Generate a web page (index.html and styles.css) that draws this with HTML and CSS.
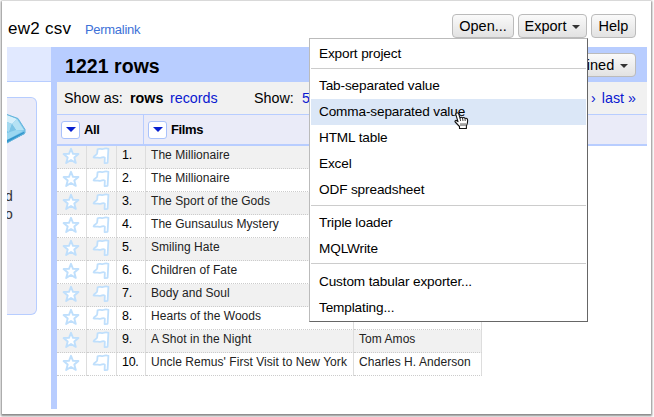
FILE: index.html
```html
<!DOCTYPE html>
<html lang="en">
<head>
<meta charset="utf-8">
<title>Project rows</title>
<link rel="stylesheet" href="styles.css">
</head>
<body>
<svg class="defs" width="0" height="0">
  <symbol id="star" viewBox="0 0 18 18"><path d="M9 1.8L11 6.8L16.4 7L12.3 10.5L13.8 15.9L9 13L4.2 15.9L5.7 10.5L1.6 7L7 6.8Z" fill="#fff" stroke="#bfdffc" stroke-width="1.9" stroke-linejoin="round"/></symbol>
  <symbol id="flag" viewBox="0 0 18 18"><path d="M5.6 2.2C7.5 1.2 9 2.6 11 2C13 1.3 14.8 1.3 16.4 1.8L15.6 15.8L12.6 16.2L12.8 10.6C11 9.2 10 11.3 7.5 10.8C5.5 10 4 11.2 1.6 10.4C2 8.5 5.4 8 5.2 6.2Z" fill="#fff" stroke="#bfdffc" stroke-width="1.8" stroke-linejoin="round"/></symbol>
</svg>
<div class="window">
  <header class="header">
    <span class="project">ew2 csv</span>
    <a class="permalink">Permalink</a>
    <div class="actions">
      <span class="button open">Open...</span>
      <span class="button export">Export<i class="caret"></i></span>
      <span class="button help">Help</span>
    </div>
  </header>
  <div class="body">
    <aside class="side">
      <div class="tabs"></div>
      <div class="facet">
        <svg class="gem" width="19" height="32" viewBox="0 0 19 32">
          <path d="M0 1.5L11 5.5L18 16.5L17.5 20L0 30Z" fill="#76c2e8"/>
          <path d="M0 2L10 6L5 11L0 9Z" fill="#d6f0fb"/>
          <path d="M0 9L5 11L2 19L0 18Z" fill="#a4daf1"/>
          <path d="M10 6L17 17L9 17L5 11Z" fill="#b5e2f4"/>
          <path d="M5 11L9 17L2 20Z" fill="#7cc4e6"/>
          <path d="M0 20L9 17L17 17.5L0 27Z" fill="#9bd7f0"/>
          <path d="M0 27L17.5 18.5V21L0 30Z" fill="#3295cc"/>
          <path d="M0 1.5L11 5.5L18 16.5V20L0 30" fill="none" stroke="#65b5dc"/>
        </svg>
        <div class="hint">d</div>
        <div class="hint">o</div>
      </div>
    </aside>
    <main class="main">
      <div class="summary"><h1>1221 rows</h1><span class="button refined">fined<i class="caret"></i></span></div>
      <div class="controls">
        <span class="showas">Show as:</span><b>rows</b><a class="records">records</a>
        <span class="show">Show:</span><a class="five">5</a><a class="pager">› <span>last »</span></a>
      </div>
      <div class="thead">
        <div class="th all"><i class="drop"></i>All</div>
        <div class="th"><i class="drop"></i>Films</div>
      </div>
      <div class="rows">
        <div class="row"><div><svg><use href="#star"/></svg></div><div><svg><use href="#flag"/></svg></div><div class="num">1.</div><div>The Millionaire</div><div></div></div>
        <div class="row"><div><svg><use href="#star"/></svg></div><div><svg><use href="#flag"/></svg></div><div class="num">2.</div><div>The Millionaire</div><div></div></div>
        <div class="row"><div><svg><use href="#star"/></svg></div><div><svg><use href="#flag"/></svg></div><div class="num">3.</div><div>The Sport of the Gods</div><div></div></div>
        <div class="row"><div><svg><use href="#star"/></svg></div><div><svg><use href="#flag"/></svg></div><div class="num">4.</div><div>The Gunsaulus Mystery</div><div></div></div>
        <div class="row"><div><svg><use href="#star"/></svg></div><div><svg><use href="#flag"/></svg></div><div class="num">5.</div><div>Smiling Hate</div><div></div></div>
        <div class="row"><div><svg><use href="#star"/></svg></div><div><svg><use href="#flag"/></svg></div><div class="num">6.</div><div>Children of Fate</div><div></div></div>
        <div class="row"><div><svg><use href="#star"/></svg></div><div><svg><use href="#flag"/></svg></div><div class="num">7.</div><div>Body and Soul</div><div></div></div>
        <div class="row"><div><svg><use href="#star"/></svg></div><div><svg><use href="#flag"/></svg></div><div class="num">8.</div><div>Hearts of the Woods</div><div></div></div>
        <div class="row"><div><svg><use href="#star"/></svg></div><div><svg><use href="#flag"/></svg></div><div class="num">9.</div><div>A Shot in the Night</div><div>Tom Amos</div></div>
        <div class="row"><div><svg><use href="#star"/></svg></div><div><svg><use href="#flag"/></svg></div><div class="num">10.</div><div>Uncle Remus' First Visit to New York</div><div>Charles H. Anderson</div></div>
      </div>
    </main>
  </div>
</div>
<div class="menu">
  <div class="item">Export project</div>
  <hr class="first">
  <div class="item">Tab-separated value</div>
  <div class="item active">Comma-separated value</div>
  <div class="item">HTML table</div>
  <div class="item">Excel</div>
  <div class="item">ODF spreadsheet</div>
  <hr>
  <div class="item">Triple loader</div>
  <div class="item">MQLWrite</div>
  <hr class="last">
  <div class="item">Custom tabular exporter...</div>
  <div class="item">Templating...</div>
</div>
<svg class="cursor" width="17" height="18" viewBox="0 0 17 18">
  <path d="M2.2 1.2C3.4.3 4.5 1 4.8 2.2L6 6C7 5 8 5.2 8.5 6C9.5 5.2 10.6 5.4 11 6.4C12.4 5.8 13.5 6.5 13.6 8C13.8 11 13.2 12 12.4 14V16.5H5.5V14.5L1.2 10C.4 8.8 1.8 7.8 3.2 9L4 9.6L2 3.2C1.7 2.3 1.7 1.7 2.2 1.2Z" fill="#fff" stroke="#111" stroke-width="1.1" stroke-linejoin="round"/>
  <path d="M6 6L6.6 9M8.5 6L9 9M11 6.5L11.2 9M7 11.2V14M9 11.2V14M11 11.2V14" stroke="#111" stroke-width=".8" fill="none"/>
</svg>
</body>
</html>
```
FILE: styles.css
```css
* { box-sizing: border-box; }
body {
  margin: 0;
  width: 654px;
  height: 417px;
  overflow: hidden;
  background: #fff;
  font-family: "Liberation Sans", Arial, sans-serif;
  color: #000;
}
.defs { position: absolute; }
.window {
  width: 649px;
  height: 413px;
  margin: 1px 0 0 2px;
  padding: 0 4px 5px 5px;
  background: #fff;
  box-shadow: 0 1px 2px 1px #888;
}
.header { display: flex; height: 46px; align-items: flex-start; white-space: nowrap; }
.project { width: 78px; padding: 17px 0 0 1px; font-size: 17px; line-height: 21px; letter-spacing: .25px; }
.permalink { padding-top: 20px; font-size: 13px; line-height: 17px; color: #3d71d8; letter-spacing: -.3px; }
.actions { display: flex; gap: 4px; margin: 13px 11px 0 auto; }
.button {
  display: flex;
  align-items: center;
  justify-content: center;
  height: 24px;
  border: 1px solid #bbb;
  border-radius: 4px;
  background: linear-gradient(#fafafa, #e2e2e2);
  font-size: 14.5px;
  white-space: nowrap;
}
.open { width: 62px; }
.export { width: 69px; }
.help { width: 45px; }
.caret {
  margin: 2px 0 0 6px;
  border: 4px solid transparent;
  border-top-color: #333;
  border-bottom: 0;
}
.body { display: flex; height: 362px; }
.side { width: 44px; }
.tabs { height: 35px; background: #e1e9ff; border-bottom: 1px solid #b8cdff; }
.facet {
  width: 30px;
  height: 218px;
  margin-top: 15px;
  padding-top: 15px;
  overflow: hidden;
  background: #eaebf8;
  border: 1px solid #b7cdff;
  border-left: 0;
  border-radius: 0 6px 6px 0;
}
.gem { display: block; margin-bottom: 42px; }
.hint { height: 18px; margin-left: -2px; font-size: 14px; line-height: 18px; color: #333; }
.main { flex: 1; border-left: 6px solid #b8cdff; }
.summary {
  display: flex;
  height: 35px;
  padding: 0 11px 0 8px;
  align-items: center;
  justify-content: space-between;
  background: #b8cdff;
}
h1 { margin: 3px 0 0; font-size: 19.5px; line-height: 24px; letter-spacing: .05px; }
.refined { width: 79px; margin-top: 1px; padding-left: 18px; }
.controls {
  display: flex;
  height: 33px;
  padding: 0 11px 0 7px;
  align-items: center;
  background: #f1f1f1;
  border-bottom: 1px solid #b8cdff;
  font-size: 14.3px;
  white-space: nowrap;
}
.controls a { color: #0a18d0; }
.showas { width: 66px; }
.controls b { width: 40px; }
.records { width: 84px; }
.show { width: 48px; }
.pager { margin-left: auto; }
.pager span { margin-left: 2px; }
.thead { display: flex; height: 31px; background: #eaebf8; border-bottom: 2px solid #b8cdff; }
.th { display: flex; align-items: center; padding-left: 4px; font-size: 13px; font-weight: bold; letter-spacing: -.35px; }
.all { width: 87px; border-right: 1px solid #b8cdff; }
.drop {
  display: grid;
  place-items: center;
  width: 19px;
  height: 18px;
  margin-right: 4px;
  border: 1px solid #a9c2fb;
  border-radius: 3px;
  background: #fff;
}
.drop::before { content: ""; border: 5px solid transparent; border-top-color: #0820d0; border-bottom: 0; }
.rows { width: 425px; }
.row { display: grid; grid-template-columns: 30px 30px 29px 208px 128px; height: 23px; font-size: 12px; line-height: 18px; letter-spacing: .05px; color: #222; }
.row:nth-child(odd) { background: #f1f1f1; }
.row > div { border-right: 1px solid #ddd; border-bottom: 1px dotted #ccc; padding-left: 5px; white-space: nowrap; }
.row .num { color: #000; padding-left: 5px; font-size: 12.5px; letter-spacing: -.3px; }
.row svg { display: block; width: 18px; height: 18px; margin-top: 1px; }
.menu {
  position: absolute;
  left: 309px;
  top: 38px;
  width: 279px;
  height: 284px;
  padding: 2px 1px;
  background: #fff;
  border: 1px solid #bbb;
  border-right-color: #666;
  border-bottom-color: #666;
}
.item { height: 26px; padding-left: 8px; font-size: 13.6px; line-height: 26px; letter-spacing: -.13px; white-space: nowrap; }
.active { background: #dbe7f7; }
hr { height: 1px; margin: 2px 0 4px; border: 0; background: #ccc; }
.first { margin: 1px 0 4px; }
.last { margin: 1px 0 5px; }
.cursor { position: absolute; left: 454px; top: 112px; }
```
